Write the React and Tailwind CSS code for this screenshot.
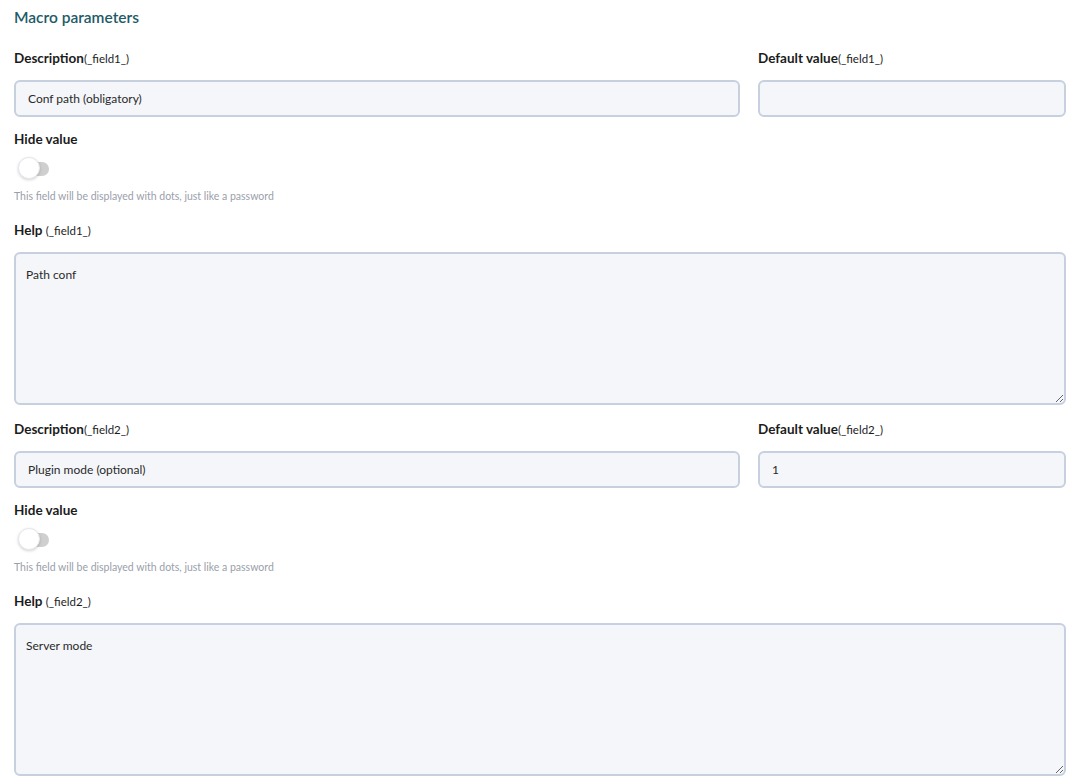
import React from "react";

const fields = [
  { key: "_field1_", description: "Conf path (obligatory)", value: "", help: "Path conf" },
  { key: "_field2_", description: "Plugin mode (optional)", value: "1", help: "Server mode" },
];

const Toggle = () => (
  <div className="relative h-[24px] w-[40px] mt-[7px]">
    <div className="absolute left-[10px] top-[6px] h-[14px] w-[25px] rounded-full bg-[#cfcfcf]" />
    <div className="absolute left-[4px] top-[1px] h-[22px] w-[22px] rounded-full bg-white border border-[#e6e8ee] shadow-[0_1px_3px_rgba(0,0,0,0.18)]" />
  </div>
);

const FieldBlock = ({ field }) => (
  <div>
    <div className="grid grid-cols-[726px_1fr] gap-x-[18px]">
      <div>
        <div className="text-[13.5px] leading-[20px] font-bold text-[#1c1c1c] h-[22px]">
          Description<span className="font-normal text-[11.5px]">({field.key})</span>
        </div>
        <input
          readOnly
          value={field.description}
          className="mt-[10px] h-[37px] w-full rounded-[6px] border-2 border-[#c6d0df] bg-[#f4f6fa] px-[12px] text-[12px] text-[#2a2a2a] outline-none"
        />
      </div>
      <div>
        <div className="text-[13.5px] leading-[20px] font-bold text-[#1c1c1c] h-[22px]">
          Default value<span className="font-normal text-[11.5px]">({field.key})</span>
        </div>
        <input
          readOnly
          value={field.value}
          className="mt-[10px] h-[37px] w-full rounded-[6px] border-2 border-[#c6d0df] bg-[#f4f6fa] px-[12px] text-[12px] text-[#2a2a2a] outline-none"
        />
      </div>
    </div>
    <div className="mt-[12px] text-[13.5px] leading-[20px] font-bold text-[#1c1c1c]">Hide value</div>
    <Toggle />
    <div className="mt-[9px] text-[10.5px] leading-[14px] text-[#9aa0aa]">
      This field will be displayed with dots, just like a password
    </div>
    <div className="mt-[17px] text-[13.5px] leading-[20px] font-bold text-[#1c1c1c]">
      Help <span className="font-normal text-[11.5px]">({field.key})</span>
    </div>
    <textarea
      readOnly
      value={field.help}
      className="mt-[11px] block h-[153px] w-full rounded-[6px] border-2 border-[#c6d0df] bg-[#f4f6fa] px-[10px] py-[12px] text-[12px] text-[#2a2a2a] outline-none resize-y"
    />
  </div>
);

export default function App() {
  return (
    <div className="min-h-screen bg-white pl-[14px] pr-[12px] pt-[6px]" style={{ fontFamily: "Lato, 'Noto Sans', sans-serif" }}>
      <h2 className="text-[15.5px] leading-[22px] font-semibold text-[#1d5b68]">Macro parameters</h2>
      <div className="mt-[20px] flex flex-col gap-[14px]">
        {fields.map((f) => (
          <FieldBlock key={f.key} field={f} />
        ))}
      </div>
    </div>
  );
}
